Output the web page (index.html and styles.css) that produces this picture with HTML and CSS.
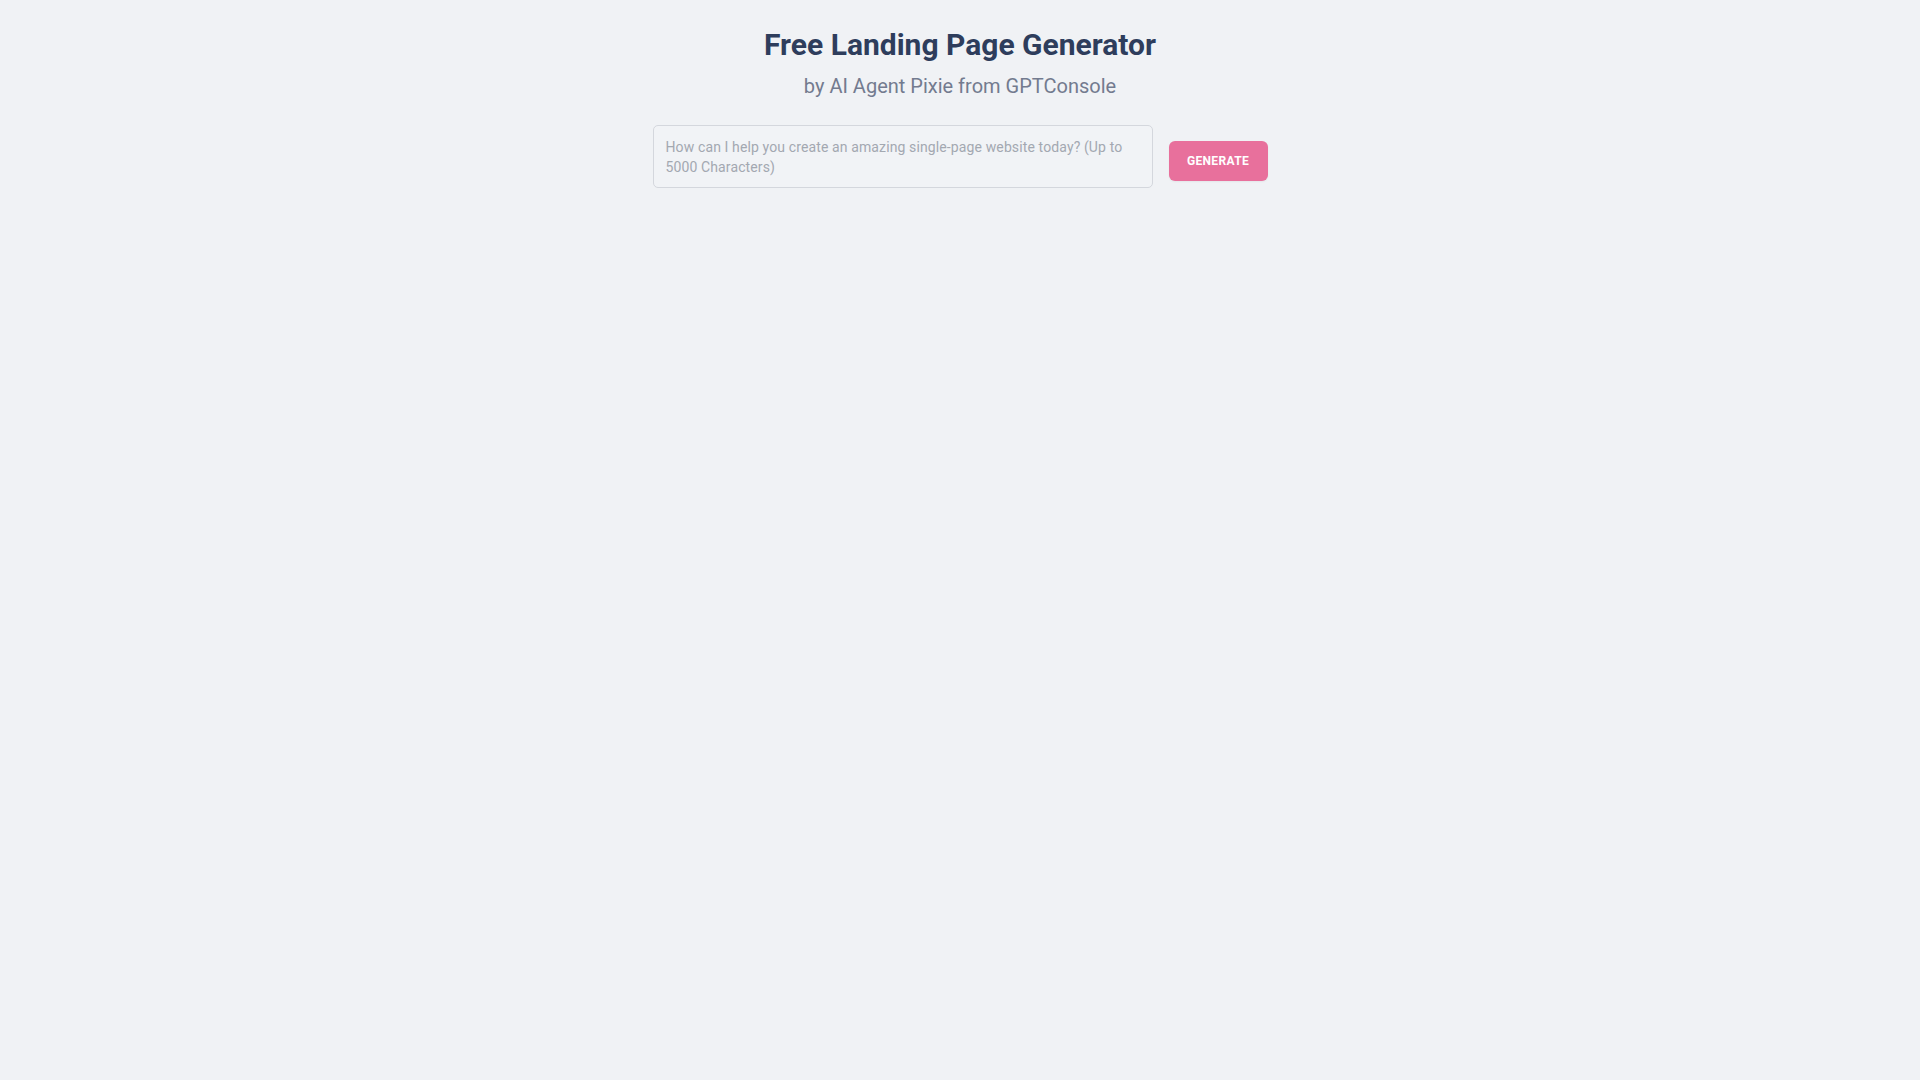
FILE: index.html
```html
<!DOCTYPE html>
<html lang="en">
<head>
<meta charset="utf-8">
<title>Free Landing Page Generator</title>
<link rel="stylesheet" href="styles.css">
</head>
<body>
<main class="page">
  <header class="hero">
    <h1 class="title">Free Landing Page Generator</h1>
    <p class="subtitle">by AI Agent Pixie from GPTConsole</p>
  </header>
  <form class="prompt-row" onsubmit="return false;">
    <textarea class="prompt" rows="2" placeholder="How can I help you create an amazing single-page website today? (Up to 5000 Characters)"></textarea>
    <button class="generate" type="submit">Generate</button>
  </form>
</main>
</body>
</html>
```
FILE: styles.css
```css
* { box-sizing: border-box; }
html, body {
  margin: 0;
  padding: 0;
  background: #f0f2f5;
  font-family: Roboto, "Liberation Sans", Arial, sans-serif;
}
.page {
  min-height: 100vh;
  display: flex;
  flex-direction: column;
  align-items: center;
  padding-top: 27px;
}
.hero {
  display: flex;
  flex-direction: column;
  align-items: center;
}
.title {
  margin: 0;
  font-size: 30px;
  line-height: 36px;
  font-weight: 700;
  color: #2e3d5c;
}
.subtitle {
  margin: 9px 0 0;
  font-size: 20px;
  line-height: 28px;
  font-weight: 400;
  color: #737b8f;
}
.prompt-row {
  margin-top: 25px;
  display: flex;
  align-items: flex-start;
  gap: 16px;
}
.prompt {
  display: block;
  width: 500px;
  height: 63px;
  padding: 11px 12px 9px;
  border: 1px solid #d4d7dd;
  border-radius: 5px;
  background: #f1f3f6;
  font-family: Roboto, "Liberation Sans", Arial, sans-serif;
  font-size: 14px;
  line-height: 20px;
  letter-spacing: 0.12px;
  color: #374151;
  resize: none;
  outline: none;
}
.prompt::placeholder { color: #a3a8b1; }
.generate {
  margin-top: 16px;
  height: 40px;
  width: 99px;
  padding: 0;
  border: none;
  border-radius: 6px;
  background: #e8709c;
  color: #ffffff;
  font-family: Roboto, "Liberation Sans", Arial, sans-serif;
  font-size: 12px;
  font-weight: 700;
  letter-spacing: 0.03em;
  text-transform: uppercase;
  cursor: pointer;
  box-shadow: 0 1px 2px rgba(0,0,0,0.05);
}
```
